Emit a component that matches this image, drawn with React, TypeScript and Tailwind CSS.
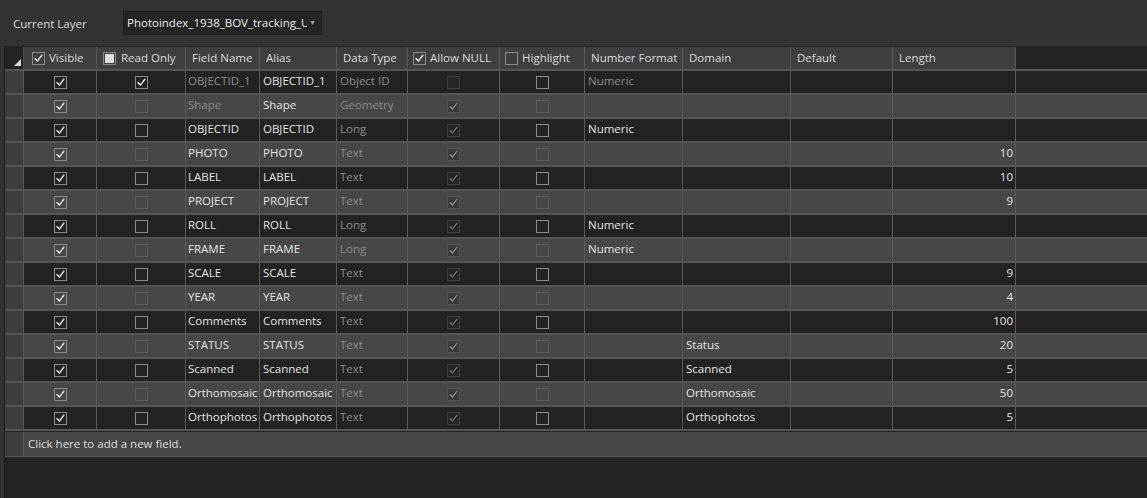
import React from 'react'

type Tone = 'on' | 'dim' | 'off'

type Field = {
  name: string
  alias: string
  type: string
  readOnly?: boolean
  locked?: boolean
  allowNull?: boolean
  numberFormat?: string
  domain?: string
  length?: string
}

const fields: Field[] = [
  { name: 'OBJECTID_1', alias: 'OBJECTID_1', type: 'Object ID', readOnly: true, locked: true, allowNull: false, numberFormat: 'Numeric' },
  { name: 'Shape', alias: 'Shape', type: 'Geometry', locked: true },
  { name: 'OBJECTID', alias: 'OBJECTID', type: 'Long', numberFormat: 'Numeric' },
  { name: 'PHOTO', alias: 'PHOTO', type: 'Text', length: '10' },
  { name: 'LABEL', alias: 'LABEL', type: 'Text', length: '10' },
  { name: 'PROJECT', alias: 'PROJECT', type: 'Text', length: '9' },
  { name: 'ROLL', alias: 'ROLL', type: 'Long', numberFormat: 'Numeric' },
  { name: 'FRAME', alias: 'FRAME', type: 'Long', numberFormat: 'Numeric' },
  { name: 'SCALE', alias: 'SCALE', type: 'Text', length: '9' },
  { name: 'YEAR', alias: 'YEAR', type: 'Text', length: '4' },
  { name: 'Comments', alias: 'Comments', type: 'Text', length: '100' },
  { name: 'STATUS', alias: 'STATUS', type: 'Text', domain: 'Status', length: '20' },
  { name: 'Scanned', alias: 'Scanned', type: 'Text', domain: 'Scanned', length: '5' },
  { name: 'Orthomosaic', alias: 'Orthomosaic', type: 'Text', domain: 'Orthomosaic', length: '50' },
  { name: 'Orthophotos', alias: 'Orthophotos', type: 'Text', domain: 'Orthophotos', length: '5' },
]

function Check({ color }: { color: string }) {
  return (
    <svg viewBox="0 0 13 13" className="h-[11px] w-[11px]" fill="none">
      <path d="M2.5 6.8 L5.2 9.5 L10.3 2.8" stroke={color} strokeWidth="1.6" strokeLinecap="square" />
    </svg>
  )
}

// grid checkbox; tone controls how washed-out it is drawn
function Box({ checked, tone, alt }: { checked?: boolean; tone: Tone; alt: boolean }) {
  let cls = 'border-[#8a8a8a] bg-transparent'
  let mark = '#ffffff'
  if (tone === 'dim') {
    cls = 'border-[#5e5e5e] bg-transparent'
    mark = '#9a9a9a'
  }
  if (tone === 'off') {
    cls = alt ? 'border-[#555555] bg-[#3a3a3a]' : 'border-[#3e3e3e] bg-[#262626]'
    mark = alt ? '#8a8a8a' : '#6e6e6e'
  }
  return (
    <div className={`flex h-[13px] w-[13px] items-center justify-center border ${cls}`}>
      {checked && <Check color={mark} />}
    </div>
  )
}

function HeaderBox({ state }: { state: 'checked' | 'partial' | 'empty' }) {
  return (
    <div className="flex h-[13px] w-[13px] shrink-0 items-center justify-center border border-[#8a8a8a]">
      {state === 'checked' && <Check color="#ffffff" />}
      {state === 'partial' && <div className="h-[9px] w-[9px] bg-[#dedede]" />}
    </div>
  )
}

const cell = 'flex h-full shrink-0 items-center overflow-hidden whitespace-nowrap border-r border-[#5a5a5a]'

export default function App() {
  return (
    <div className="flex h-[498px] w-[1147px] flex-col overflow-hidden bg-[#333333] font-['Segoe_UI','Open_Sans',sans-serif] text-[11.5px] text-[#e4e4e4]">
      {/* layer picker */}
      <div className="flex h-[46px] shrink-0 items-center pl-[13px]">
        <span className="w-[110px] pt-px text-[#dcdcdc]">Current Layer</span>
        <div className="flex h-[24px] w-[199px] items-center border border-[#1e1e1e] bg-[#242424] pl-[3px] pr-[5px]">
          <span className="w-[180px] overflow-hidden whitespace-nowrap text-[#ececec]">Photoindex_1938_BOV_tracking_Update</span>
          <span className="ml-auto text-[7px] text-[#a0a0a0]">▼</span>
        </div>
      </div>

      {/* fields grid */}
      <div className="ml-[4px] flex flex-1 flex-col border-l border-[#1c1c1c] bg-[#232323]">
        <div className="mt-px flex h-[22px] shrink-0 text-[#dcdcdc]">
          <div className="relative h-full w-[19px] shrink-0 border-r border-[#4a4a4a] bg-[#232323]">
            <div className="absolute bottom-[3px] right-[2px] h-0 w-0 border-b-[7px] border-l-[7px] border-b-[#d8d8d8] border-l-transparent" />
          </div>
          <div className={`${cell} w-[73px] gap-[4px] bg-[#3f3f3f] pl-[8px]`}>
            <HeaderBox state="checked" />
            <span>Visible</span>
          </div>
          <div className={`${cell} w-[89px] gap-[5px] bg-[#3f3f3f] pl-[6px]`}>
            <HeaderBox state="partial" />
            <span>Read Only</span>
          </div>
          <div className={`${cell} w-[74px] bg-[#3f3f3f] pl-[6px]`}>Field Name</div>
          <div className={`${cell} w-[77px] bg-[#3f3f3f] pl-[6px]`}>Alias</div>
          <div className={`${cell} w-[71px] bg-[#3f3f3f] pl-[6px]`}>Data Type</div>
          <div className={`${cell} w-[92px] gap-[4px] bg-[#3f3f3f] pl-[5px]`}>
            <HeaderBox state="checked" />
            <span>Allow NULL</span>
          </div>
          <div className={`${cell} w-[85px] gap-[4px] bg-[#3f3f3f] pl-[5px]`}>
            <HeaderBox state="empty" />
            <span>Highlight</span>
          </div>
          <div className={`${cell} w-[98px] bg-[#3f3f3f] pl-[6px]`}>Number Format</div>
          <div className={`${cell} w-[108px] bg-[#3f3f3f] pl-[6px]`}>Domain</div>
          <div className={`${cell} w-[102px] bg-[#3f3f3f] pl-[6px]`}>Default</div>
          <div className={`${cell} w-[123px] bg-[#3f3f3f] pl-[6px]`}>Length</div>
          <div className="flex-1" />
        </div>

        {fields.map((f, i) => {
          const alt = i % 2 === 1
          const bg = alt ? 'bg-[#474747]' : 'bg-[#232323]'
          const dim = alt ? 'dim' : 'on'
          return (
            <div key={f.name} className={`flex h-[24px] shrink-0 border-t-2 border-[#565656] ${bg}`}>
              <div className="h-full w-[19px] shrink-0 border-r border-[#5a5a5a] bg-[#3d3d3d]" />
              <div className={`${cell} w-[73px] justify-center`}>
                <Box checked tone="on" alt={alt} />
              </div>
              <div className={`${cell} w-[89px] justify-center`}>
                <Box checked={f.readOnly} tone={f.readOnly ? 'on' : dim} alt={alt} />
              </div>
              <div className={`${cell} w-[74px] pb-[2px] pl-[2px] ${f.locked ? 'text-[#8c8c8c]' : ''}`}>{f.name}</div>
              <div className={`${cell} w-[77px] pb-[2px] pl-[3px]`}>{f.alias}</div>
              <div className={`${cell} w-[71px] pb-[2px] pl-[3px] text-[#8c8c8c]`}>{f.type}</div>
              <div className={`${cell} w-[92px] justify-center`}>
                <Box checked={f.allowNull !== false} tone="off" alt={alt} />
              </div>
              <div className={`${cell} w-[85px] justify-center`}>
                <Box tone={dim} alt={alt} />
              </div>
              <div className={`${cell} w-[98px] pb-[2px] pl-[3px] ${f.locked ? 'text-[#8c8c8c]' : ''}`}>{f.numberFormat}</div>
              <div className={`${cell} w-[108px] pb-[2px] pl-[3px]`}>{f.domain}</div>
              <div className={`${cell} w-[102px]`} />
              <div className={`${cell} w-[123px] justify-end pb-[2px] pr-[2px]`}>{f.length}</div>
              <div className="flex-1" />
            </div>
          )
        })}

        {/* new row */}
        <div className="h-[3px] shrink-0 border-t-2 border-[#565656]" />
        <div className="flex h-[25px] shrink-0 border-b border-[#5a5a5a] bg-[#474747]">
          <div className="h-full w-[19px] shrink-0 border-r border-[#5a5a5a] bg-[#3d3d3d]" />
          <div className="flex items-center pb-px pl-[4px] text-[#dcdcdc]">Click here to add a new field.</div>
        </div>
      </div>
    </div>
  )
}
